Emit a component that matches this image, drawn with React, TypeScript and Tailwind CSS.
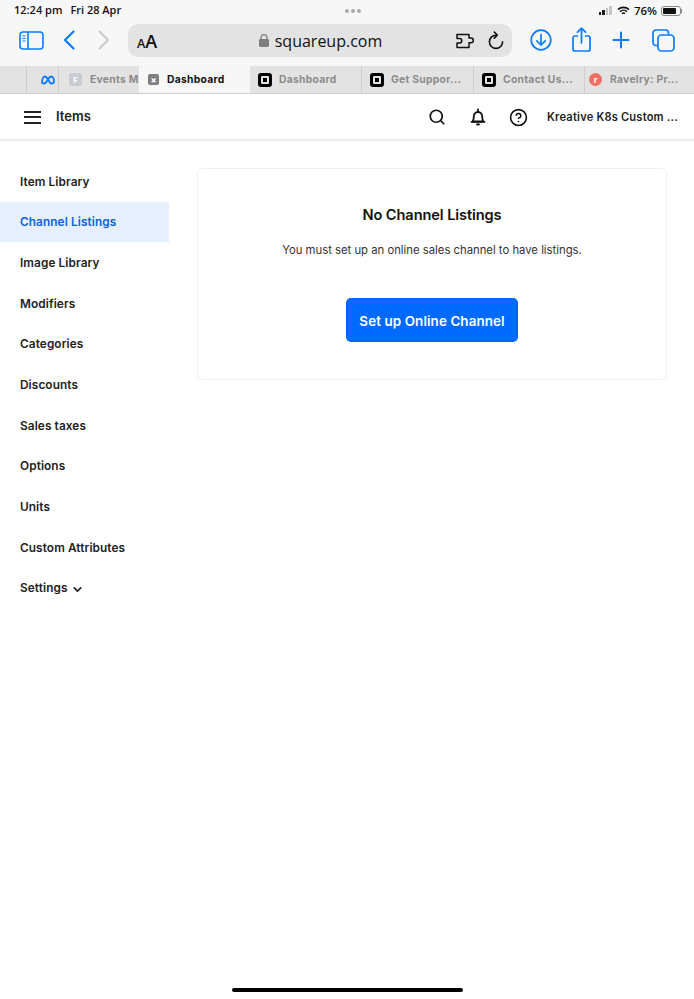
import type { ReactNode } from "react";
import { ChevronDown, CircleHelp, Search } from "lucide-react";

const navItems = [
  "Item Library",
  "Channel Listings",
  "Image Library",
  "Modifiers",
  "Categories",
  "Discounts",
  "Sales taxes",
  "Options",
  "Units",
  "Custom Attributes",
];

function SquareLogo() {
  return (
    <span className="flex h-[14px] w-[14px] shrink-0 items-center justify-center rounded-[3px] bg-black">
      <span className="flex h-[8px] w-[8px] items-center justify-center rounded-[1px] bg-[#e3e3e3]">
        <span className="h-[4px] w-[4px] bg-black" />
      </span>
    </span>
  );
}

function Tab({ icon, label, width }: { icon: ReactNode; label: string; width: string }) {
  return (
    <div className={`flex h-full shrink-0 items-center gap-[7px] border-r border-[#cfcfcf] pl-[8px] ${width}`}>
      {icon}
      <span className="truncate text-[10.300px] font-bold tracking-[0.3px] text-[#8b8b8b]">{label}</span>
    </div>
  );
}

function Signal() {
  return (
    <span className="flex items-end gap-[1px]">
      <span className="h-[3px] w-[2.500px] bg-[#1a1a1a]" />
      <span className="h-[5px] w-[2.500px] bg-[#1a1a1a]" />
      <span className="h-[7px] w-[2.500px] bg-[#c4c4c4]" />
      <span className="h-[9px] w-[2.500px] bg-[#c4c4c4]" />
    </span>
  );
}

export default function App() {
  return (
    <div className="flex min-h-[999px] w-[694px] flex-col overflow-hidden bg-white font-['Inter',sans-serif] text-[#1a1a1a]">
      {/* ipad status bar */}
      <div className="flex h-[20px] items-center bg-[#f7f7f7] pl-[14px] pr-[12px] pt-[1px] font-['Open_Sans',sans-serif] text-[11px] font-semibold text-[#111]">
        <div className="flex flex-1 gap-[8px] text-[11px]">
          <span>12:24 pm</span>
          <span>Fri 28 Apr</span>
        </div>
        <div className="mr-[-9px] flex gap-[2px]">
          <span className="h-[4px] w-[4px] rounded-full bg-[#a9a9a9]" />
          <span className="h-[4px] w-[4px] rounded-full bg-[#a9a9a9]" />
          <span className="h-[4px] w-[4px] rounded-full bg-[#a9a9a9]" />
        </div>
        <div className="flex flex-1 items-center justify-end gap-[4px]">
          <Signal />
          <svg className="ml-[1px]" width="13" height="10" viewBox="0 0 13 10" fill="none" stroke="#111" strokeWidth="1.6">
            <path d="M1 3.600a8 8 0 0 1 11 0" />
            <path d="M3 5.700a5 5 0 0 1 7 0" />
            <path d="M5 7.700a2.200 2.200 0 0 1 3 0" />
          </svg>
          <span className="text-[11.500px]">76%</span>
          <span className="flex items-center">
            <span className="flex h-[10px] w-[20px] items-center rounded-[3px] border border-[#8a8a8a] p-[1px]">
              <span className="h-full w-[13px] rounded-[1px] bg-[#111]" />
            </span>
            <span className="h-[4px] w-[1px] bg-[#8a8a8a]" />
          </span>
        </div>
      </div>

      {/* safari toolbar */}
      <div className="flex h-[46px] items-start bg-[#f7f7f7] pl-[19px] pt-[4px]">
        <svg className="mt-[7px]" width="25" height="19" viewBox="0 0 25 19" fill="none" stroke="#0a7bff" strokeWidth="1.600">
          <rect x="1" y="1" width="23" height="17" rx="3" />
          <path d="M9 1v17" />
          <path d="M3.500 5h3M3.500 7.500h3M3.500 10h3" strokeWidth="1.200" />
        </svg>
        <svg className="ml-[19px] mt-[6px]" width="12" height="20" viewBox="0 0 12 20" fill="none" stroke="#0a7bff" strokeWidth="2.200" strokeLinecap="round" strokeLinejoin="round">
          <path d="M10.500 1.500 2 10l8.500 8.500" />
        </svg>
        <svg className="ml-[23px] mt-[6px]" width="12" height="20" viewBox="0 0 12 20" fill="none" stroke="#c9c9c9" strokeWidth="2.200" strokeLinecap="round" strokeLinejoin="round">
          <path d="M1.500 1.500 10 10l-8.500 8.500" />
        </svg>
        <div className="ml-[18px] flex h-[33px] w-[384px] items-center rounded-[10px] bg-[#e3e3e3] pl-[9px] pr-[8px]">
          <span className="w-[120px] pt-[2px] font-['Open_Sans',sans-serif] font-semibold leading-none text-[#111]">
            <span className="text-[12.500px]">A</span>
            <span className="text-[18px]">A</span>
          </span>
          <div className="flex flex-1 items-center justify-center gap-[6px]">
            <svg width="10" height="13" viewBox="0 0 10 13" fill="#7d7d7d">
              <path d="M1.500 5V3.600a3.500 3.500 0 0 1 7 0V5H7.300V3.600a2.300 2.300 0 0 0-4.600 0V5z" />
              <rect y="5" width="10" height="8" rx="1.400" />
            </svg>
            <span className="font-['Open_Sans',sans-serif] text-[16px] font-medium text-[#111]">squareup.com</span>
          </div>
          <div className="flex w-[120px] items-center justify-end gap-[12px]">
            <svg width="20" height="16" viewBox="0 0 20 16" fill="none" stroke="#111" strokeWidth="1.500" strokeLinejoin="round">
              <path d="M1 1.500h12v3.600h2a2 2 0 0 1 0 4.600h-2v4.800H1V10h2.600a2 2 0 0 0 0-4.400H1z" />
            </svg>
            <svg width="16" height="19" viewBox="0 0 16 19" fill="none" stroke="#111" strokeWidth="1.600" strokeLinecap="round" strokeLinejoin="round">
              <path d="M8 4.200a6.600 6.600 0 1 0 6.600 6.600" />
              <path d="M6.300 1 9.200 4.100 6.300 7.200" />
            </svg>
          </div>
        </div>
        <svg className="ml-[18px] mt-[5px]" width="22" height="22" viewBox="0 0 22 22" fill="none" stroke="#0a7bff" strokeWidth="1.700" strokeLinecap="round" strokeLinejoin="round">
          <circle cx="11" cy="11" r="9.800" />
          <path d="M11 5.500v10.500M6.800 11.800 11 16l4.200-4.200" />
        </svg>
        <svg className="ml-[20px] mt-[3px]" width="19" height="25" viewBox="0 0 19 25" fill="none" stroke="#0a7bff" strokeWidth="1.700" strokeLinecap="round" strokeLinejoin="round">
          <path d="M5.500 9H3a2 2 0 0 0-2 2v11a2 2 0 0 0 2 2h13a2 2 0 0 0 2-2V11a2 2 0 0 0-2-2h-2.500" />
          <path d="M9.500 16V1.500M5.500 5.200l4-4 4 4" />
        </svg>
        <svg className="ml-[21px] mt-[7px]" width="18" height="18" viewBox="0 0 18 18" fill="none" stroke="#0a7bff" strokeWidth="2" strokeLinecap="round">
          <path d="M9 1.500v15M1.500 9h15" />
        </svg>
        <svg className="ml-[22px] mt-[5px]" width="23" height="23" viewBox="0 0 23 23" fill="none" stroke="#0a7bff" strokeWidth="1.700" strokeLinejoin="round">
          <path d="M5.500 16.500H4a3 3 0 0 1-3-3V4a3 3 0 0 1 3-3h9.500a3 3 0 0 1 3 3v1.500" />
          <rect x="6" y="6" width="16" height="16" rx="3.500" />
        </svg>
      </div>

      {/* tab strip */}
      <div className="flex h-[28px] items-center border-b border-[#cfcfcf] bg-[#e3e3e3]">
        <div className="h-full w-[27px] shrink-0 border-r border-[#cfcfcf]" />
        <div className="flex h-full w-[32px] shrink-0 items-center justify-end border-r border-[#cfcfcf] pr-[3px]">
          <svg width="14" height="10" viewBox="0 0 14 10" fill="none" stroke="#0a7bff" strokeWidth="1.800">
            <path d="M1 7.500c0-3 1.200-6 3-6 2.500 0 4 7 6.500 7C12.200 8.500 13 7.500 13 6c0-2.500-1.200-4.500-3-4.500C7.500 1.500 6 8.500 3 8.500 1.800 8.500 1 8.200 1 7.500z" />
          </svg>
        </div>
        <div className="flex h-full w-[80px] shrink-0 items-center gap-[8px] overflow-hidden pl-[10px]">
          <span className="flex h-[13px] w-[13px] shrink-0 items-center justify-center rounded-[3px] bg-[#c9cbd2] text-[8px] font-bold text-white">F</span>
          <span className="whitespace-nowrap text-[10.300px] font-bold tracking-[0.3px] text-[#8b8b8b]">Events M</span>
        </div>
        <div className="flex h-full w-[111px] shrink-0 items-center gap-[8px] bg-[#f7f7f7] pl-[9px]">
          <span className="flex h-[11px] w-[11px] items-center justify-center rounded-[2px] bg-[#7f7f7f] text-[9px] font-bold leading-none text-white">×</span>
          <span className="text-[10.300px] font-bold tracking-[0.3px] text-[#111]">Dashboard</span>
        </div>
        <Tab icon={<SquareLogo />} label="Dashboard" width="w-[112px]" />
        <Tab icon={<SquareLogo />} label="Get Suppor..." width="w-[112px]" />
        <Tab icon={<SquareLogo />} label="Contact Us..." width="w-[111px]" />
        <div className="flex h-full flex-1 items-center gap-[8px] pl-[4px]">
          <span className="flex h-[13px] w-[13px] shrink-0 items-center justify-center rounded-full bg-[#ee6e62] text-[9px] font-bold leading-none text-white">r</span>
          <span className="truncate text-[10.300px] font-bold tracking-[0.3px] text-[#8b8b8b]">Ravelry: Pr...</span>
        </div>
      </div>

      {/* app header */}
      <header className="flex h-[47px] items-center border-b-2 border-[#ececec] pl-[24px] pr-[16px] pt-[1px]">
        <div className="flex w-[17px] flex-col gap-[3.500px]">
          <span className="h-[2px] bg-[#222]" />
          <span className="h-[2px] bg-[#222]" />
          <span className="h-[2px] bg-[#222]" />
        </div>
        <span className="ml-[15px] flex-1 text-[13px] font-semibold text-[#222]">Items</span>
        <Search size={18} strokeWidth={2.300} className="text-[#111]" />
        <svg className="ml-[23px]" width="18" height="18" viewBox="0 0 18 18" fill="none" stroke="#111" strokeWidth="1.800" strokeLinejoin="round">
          <path d="M3.500 13.500c1-1.200 1.300-2.400 1.300-4.700 0-2.700 1.700-4.800 4.200-4.800s4.200 2.100 4.200 4.800c0 2.300.3 3.500 1.300 4.700z" />
          <path d="M2.500 13.800h13" strokeLinecap="round" />
          <path d="M9 1.500v2" strokeLinecap="round" />
          <path d="M7.500 15.800a1.700 1.700 0 0 0 3 0" fill="#111" />
        </svg>
        <CircleHelp size={19} strokeWidth={2} className="ml-[22px] text-[#111]" />
        <span className="ml-[19px] text-[11.100px] font-semibold tracking-[0.2px] text-[#222]">Kreative K8s Custom ...</span>
      </header>

      <div className="flex flex-1 items-start">
        {/* sidebar */}
        <nav className="mt-[20px] w-[169px] shrink-0">
          {navItems.map((item) => (
            <div
              key={item}
              className={`flex h-[40.700px] items-center pl-[20px] pt-[2px] text-[11.800px] font-semibold tracking-[0.1px] ${
                item === "Channel Listings" ? "bg-[#e5effd] text-[#0b62d6]" : "text-[#222]"
              }`}
            >
              {item}
            </div>
          ))}
          <div className="flex h-[40.700px] items-center gap-[3px] pl-[20px] pt-[2px] text-[11.800px] font-semibold tracking-[0.1px] text-[#222]">
            Settings
            <ChevronDown size={13} strokeWidth={3.200} />
          </div>
        </nav>

        {/* main card */}
        <main className="ml-[28px] mt-[27px] flex h-[212px] w-[470px] flex-col items-center rounded-[6px] border border-[#f0f0f0] pt-[36px]">
          <h1 className="text-[14.600px] font-semibold leading-[20px] tracking-[-0.1px] text-[#111]">No Channel Listings</h1>
          <p className="mt-[15px] text-[11.300px] leading-[20px] text-[#333]">You must set up an online sales channel to have listings.</p>
          <button
            type="button"
            className="mt-[38px] h-[44px] w-[172px] rounded-[5px] bg-[#006aff] pt-[2px] text-[13.400px] font-semibold tracking-[0.1px] text-white"
          >
            Set up Online Channel
          </button>
        </main>
      </div>

      {/* home indicator */}
      <div className="flex justify-center pb-[7px]">
        <span className="h-[4px] w-[231px] rounded-full bg-black" />
      </div>
    </div>
  );
}
